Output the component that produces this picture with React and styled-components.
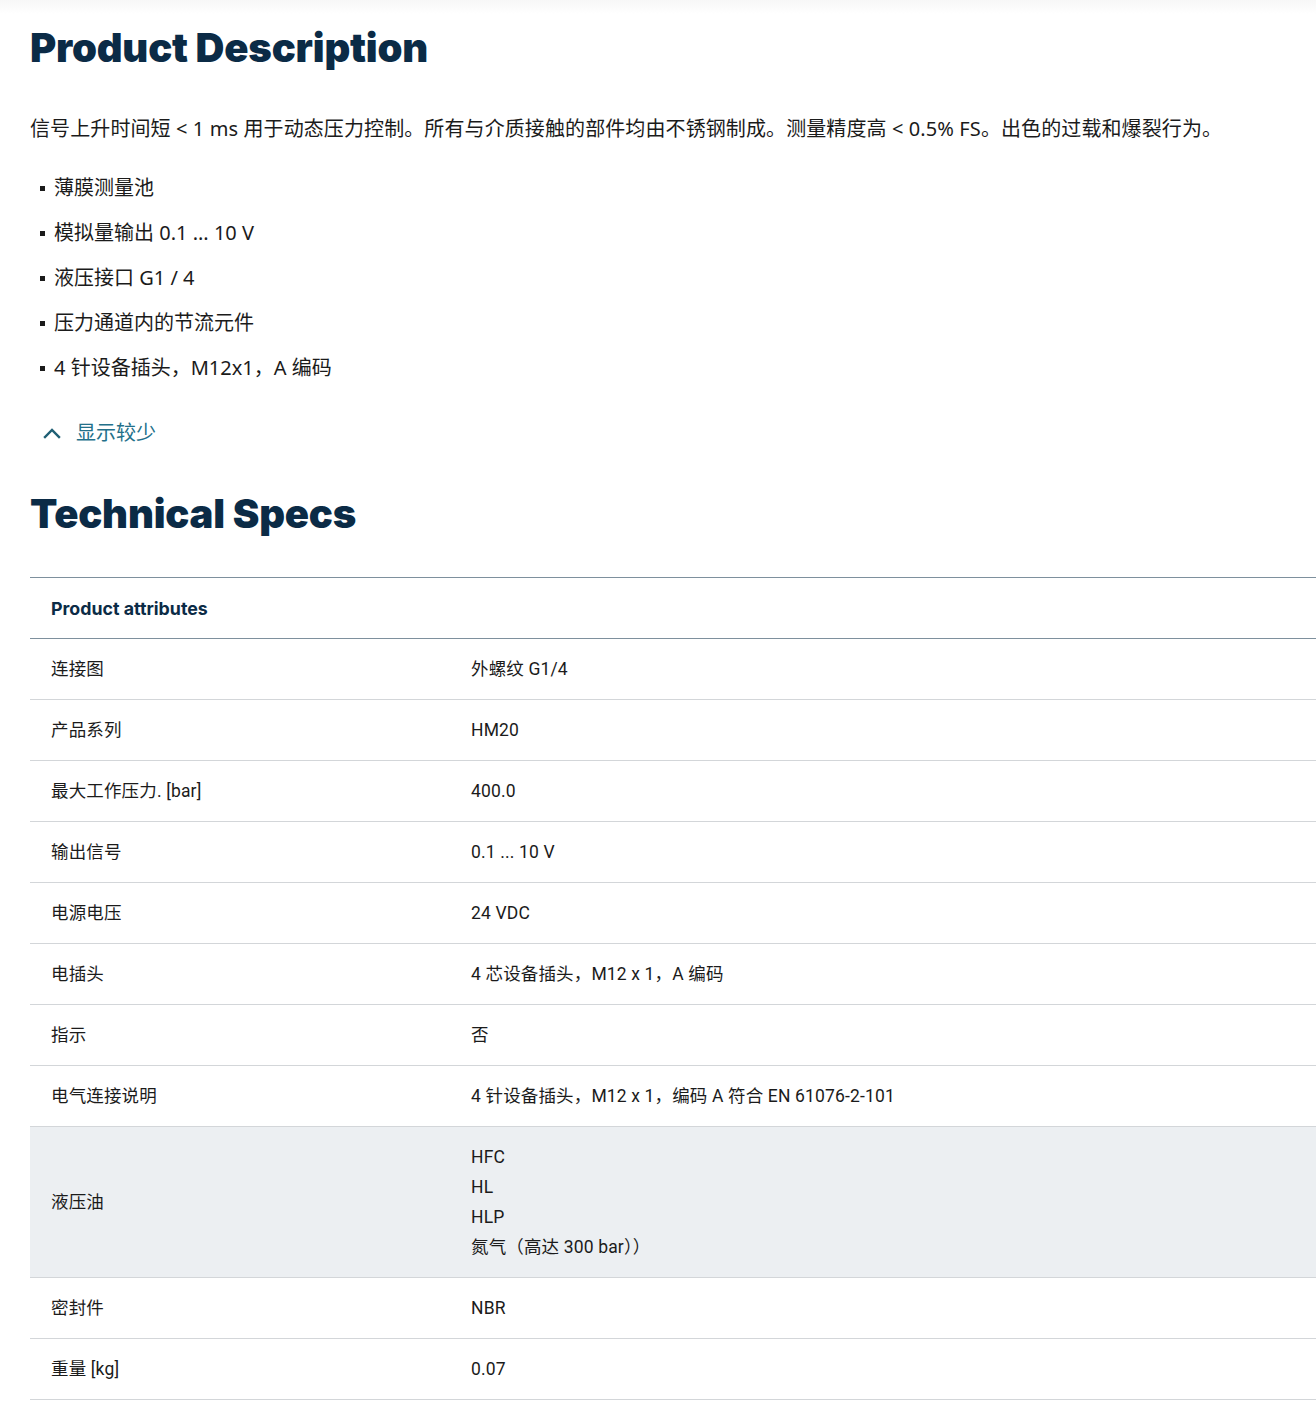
import React from "react";
import styled, { createGlobalStyle } from "styled-components";

const Global = createGlobalStyle`
  html, body { margin: 0; padding: 0; background: #fff; }
  body { font-family: "Noto Sans", "Noto Sans CJK SC", sans-serif; color: #1b1b1b; }
`;

const Page = styled.div`
  background: linear-gradient(#f7f7f7 0px, #ffffff 14px);
  padding: 22px 0 20px 30px;
  overflow: hidden;
`;

const Heading = styled.h2`
  margin: 0;
  font-family: "Inter", "Lato", sans-serif;
  font-weight: 900;
  font-size: 40px;
  line-height: 52px;
  color: #0b2b46;
  letter-spacing: -0.2px;
`;

const Para = styled.p`
  margin: 40px 0 0;
  font-size: 20px;
  line-height: 30px;
  font-family: "Noto Sans", "Noto Sans CJK SC", sans-serif;
  letter-spacing: 0.1px;
`;

const List = styled.ul`
  list-style: none;
  margin: 29px 0 0;
  padding: 0;
  display: flex;
  flex-direction: column;
  gap: 15px;
`;

const Item = styled.li`
  display: flex;
  align-items: center;
  gap: 9px;
  padding-left: 10px;
  font-size: 20px;
  line-height: 30px;
  &::before {
    content: "";
    width: 5px;
    height: 5px;
    background: #1b1b1b;
    flex: none;
  }
`;

const Toggle = styled.button`
  display: flex;
  align-items: center;
  gap: 15px;
  margin: 35px 0 0;
  padding: 0 0 0 13px;
  border: 0;
  background: none;
  font-family: "Noto Sans", "Noto Sans CJK SC", sans-serif;
  font-size: 20px;
  line-height: 30px;
  color: #23708a;
  cursor: pointer;
`;

const SpecsHeading = styled(Heading)`
  margin-top: 40px;
`;

const Table = styled.div`
  margin-top: 37px;
  width: calc(100% + 40px);
  font-family: "Roboto", "Noto Sans CJK SC", sans-serif;
  font-size: 17.5px;
  color: #1b1b1b;
`;

const HeadRow = styled.div`
  border-top: 1px solid #7e909d;
  border-bottom: 1px solid #7e909d;
  height: 60px;
  display: flex;
  align-items: center;
  padding-left: 21px;
  font-family: "Inter", "Lato", sans-serif;
  font-weight: 700;
  font-size: 17.8px;
  color: #0b2b46;
`;

const Row = styled.div`
  display: grid;
  grid-template-columns: 420px 1fr;
  border-bottom: 1px solid #d3d6d9;
  background: ${(p) => (p.$active ? "#eceff2" : "transparent")};
  align-items: center;
  min-height: 60px;
`;

const Cell = styled.div`
  padding: 15px 20px 15px 21px;
  line-height: 30px;
  display: flex;
  flex-direction: column;
  letter-spacing: 0.15px;
`;

const Chevron = () => (
  <svg width="18" height="12" viewBox="0 0 18 12" fill="none">
    <path d="M2 10 L9 3 L16 10" stroke="#1f5f74" strokeWidth="2.4" strokeLinecap="square" />
  </svg>
);

const bullets = [
  "薄膜测量池",
  "模拟量输出 0.1 ... 10 V",
  "液压接口 G1 / 4",
  "压力通道内的节流元件",
  "4 针设备插头，M12x1，A 编码",
];

const rows = [
  ["连接图", ["外螺纹 G1/4"]],
  ["产品系列", ["HM20"]],
  ["最大工作压力. [bar]", ["400.0"]],
  ["输出信号", ["0.1 ... 10 V"]],
  ["电源电压", ["24 VDC"]],
  ["电插头", ["4 芯设备插头，M12 x 1，A 编码"]],
  ["指示", ["否"]],
  ["电气连接说明", ["4 针设备插头，M12 x 1，编码 A 符合 EN 61076-2-101"]],
  ["液压油", ["HFC", "HL", "HLP", "氮气（高达 300 bar））"], true],
  ["密封件", ["NBR"]],
  ["重量 [kg]", ["0.07"]],
];

export default function App() {
  return (
    <>
      <Global />
      <Page>
        <Heading>Product Description</Heading>
        <Para>
          信号上升时间短 &lt; 1 ms 用于动态压力控制。所有与介质接触的部件均由不锈钢制成。测量精度高 &lt; 0.5% FS。出色的过载和爆裂行为。
        </Para>
        <List>
          {bullets.map((b) => (
            <Item key={b}>{b}</Item>
          ))}
        </List>
        <Toggle>
          <Chevron />
          显示较少
        </Toggle>
        <SpecsHeading>Technical Specs</SpecsHeading>
        <Table>
          <HeadRow>Product attributes</HeadRow>
          {rows.map(([k, v, active]) => (
            <Row key={k} $active={active}>
              <Cell>{k}</Cell>
              <Cell>
                {v.map((line) => (
                  <span key={line}>{line}</span>
                ))}
              </Cell>
            </Row>
          ))}
        </Table>
      </Page>
    </>
  );
}
